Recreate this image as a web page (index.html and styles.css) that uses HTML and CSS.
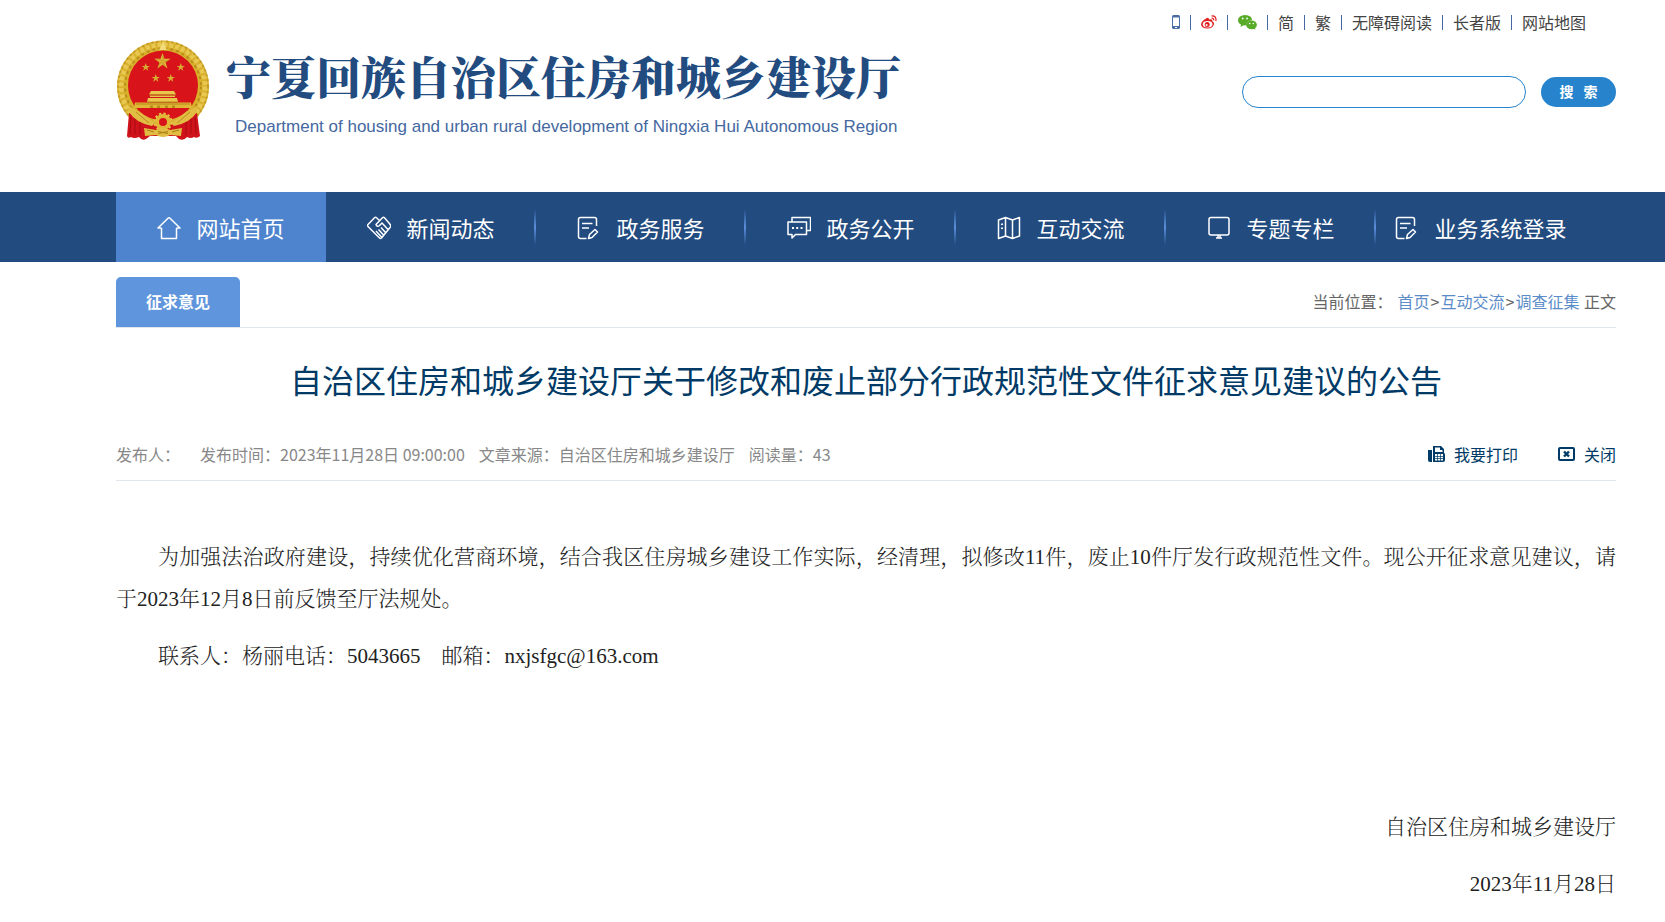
FILE: index.html
```html
<!DOCTYPE html>
<html lang="zh-CN">
<head>
    <meta charset="UTF-8">
    <meta name="viewport" content="width=device-width, initial-scale=1.0">
    <title>自治区住房和城乡建设厅关于修改和废止部分行政规范性文件征求意见建议的公告</title>
    <link rel="stylesheet" href="styles.css">
</head>
<body>
    <!-- shared icon shapes -->
    <svg class="defs" width="0" height="0" aria-hidden="true">
        <symbol id="star" viewBox="-10 -10 20 20">
            <path fill="#e3b93a" d="M0-10 2.3-3.1H9.5L3.6 1.2 5.9 8.1 0 3.8-5.9 8.1-3.6 1.2-9.5-3.1H-2.3z"/>
            <path fill="#b98a1c" d="M0 0 0-10 2.3-3.1zM0 0 9.5-3.1 3.6 1.2zM0 0 5.9 8.1 0 3.8zM0 0-5.9 8.1-3.6 1.2zM0 0-9.5-3.1-2.3-3.1z" opacity=".6"/>
        </symbol>
        <symbol id="form" viewBox="0 0 24 24">
            <path d="M19.5 10V3.500Q19.500 1.500 17.500 1.500H3.500Q1.500 1.500 1.500 3.500V20.500Q1.500 22.500 3.500 22.500H9.500M5 7.500H15.500M5 12H12M11.500 22.500 12.500 18.500 18 13.500 20.500 16 15 21.500z"/>
        </symbol>
    </svg>

    <header class="header wrap">
        <a class="brand" href="#">
            <svg class="emblem" viewBox="0 0 94 102" aria-hidden="true">
                <circle cx="47" cy="47.500" r="46" fill="#d9b02c"/>
                <circle cx="47" cy="47.500" r="42" fill="none" stroke="#e8c850" stroke-width="5" stroke-dasharray="4 2"/>
                <circle cx="47" cy="47.500" r="38" fill="none" stroke="#b98d1d" stroke-width="2" stroke-dasharray="3 3"/>
                <circle cx="47" cy="47.500" r="45" fill="none" stroke="#c39a25" stroke-width="2" stroke-dasharray="2 3"/>
                <path d="M43 11 46 5 47 0 48 5 51 11z" fill="#f3dc7a"/>
                <circle cx="47" cy="46.500" r="35" fill="#d8131a"/>
                <use href="#star" x="38" y="14" width="17" height="17"/>
                <use href="#star" x="25.500" y="24" width="8.500" height="8.500"/>
                <use href="#star" x="60.500" y="24" width="8.500" height="8.500"/>
                <use href="#star" x="35.500" y="35" width="8.500" height="8.500"/>
                <use href="#star" x="50.500" y="35" width="8.500" height="8.500"/>
                <path d="M35 52H58L60 55.500H33zM34 56.500H59V58H34zM32 59H61L62 63H31z" fill="#e9c64c"/>
                <path d="M19 63.500H75L76 69H18z" fill="#dfb735"/>
                <path d="M31 63H62M33 56H60M20 65H74" stroke="#a97c14" stroke-width=".8"/>
                <path d="M34 69V66.500H37V69M41 69V66.500H44V69M49 69V66.500H52V69M56 69V66.500H59V69" fill="#b98d1d"/>
                <path d="M13 74 20 76 31 83 38 85.500 47 87 56 85.500 63 83 74 76 81 74 84 97Q81 100 78 98 75 100 71 98 68 102 63 100L60 97H34L30 100Q26 102 23 98 18 100 15 98 12 100 11 97z" fill="#d0121a"/>
                <path d="M19 76V95M15 78 14 95M24 80V96M75 76V95M79 78 80 95M70 80V96" stroke="#a80b12" stroke-width="1"/>
                <path d="M13 67Q26 74 39 84L36 87Q20 84 13 73zM81 67Q68 74 55 84L58 87Q74 84 81 73z" fill="#e2bd43"/>
                <path d="M20 73 33 84M74 73 61 84" stroke="#b98d1d" stroke-width="1"/>
                <circle cx="47" cy="83" r="8" fill="none" stroke="#e6c248" stroke-width="3" stroke-dasharray="2.200 2"/>
                <circle cx="47" cy="83" r="6" fill="#d8131a" stroke="#e0b737" stroke-width="4"/>
                <path d="M28 89 40 91Q47 86 54 91L66 89 65 97 54 96Q47 100 40 96L29 97z" fill="#e2bd43"/>
                <path d="M31 91 38 93M63 91 56 93M42 92.500 52 94.500M52 92.500 42 94.500" stroke="#a97c14" stroke-width="1"/>
            </svg>
            <span class="brand-text">
                <strong class="brand-name">宁夏回族自治区住房和城乡建设厅</strong>
                <span class="brand-en" lang="en">Department of housing and urban rural development of Ningxia Hui Autonomous Region</span>
            </span>
        </a>
        <div class="header-side">
            <ul class="top-links">
                <li><a href="#" aria-label="手机版"><svg width="8" height="14" viewBox="0 0 8 14"><rect width="8" height="14" rx="1.500" fill="#4a6fa5"/><path fill="#fff" d="M1 2.500H7V11H1zM3 12H5V13H3z"/></svg></a></li>
                <li><a href="#" aria-label="微博"><svg width="16" height="14" viewBox="0 0 16 14"><path fill="#e02020" d="M6 3Q8 2.200 8 4.600 12 3.200 11.300 6.200 13.500 7 13 9.200 11.500 13.500 6.500 13.500 0 13.200 0 9.200 1 5.200 6 3z"/><ellipse cx="6.600" cy="9.200" rx="4.800" ry="3.200" fill="#fff"/><circle cx="6.200" cy="9.500" r="2.500" fill="#e02020"/><circle cx="5.600" cy="9.900" r="1" fill="#fff"/><path d="M10.500 1Q15.500.5 15 6M10.700 3.200Q13 3 12.700 5.300" fill="none" stroke="#e02020" stroke-width="1.200"/></svg></a></li>
                <li><a href="#" aria-label="微信"><svg width="19" height="15" viewBox="0 0 19 15"><path fill="#57ab27" d="M7 0Q14 .3 14 5.200 8.500 5.500 8.300 10.300L5 10.400 2.500 12 3 9.500Q0 8 0 5 .5.300 7 0z"/><ellipse cx="13.500" cy="9.800" rx="5.400" ry="4.400" fill="#57ab27"/><path fill="#57ab27" d="M15 13 17.200 15 17 12z"/><g fill="#fff"><circle cx="4.700" cy="3.500" r=".9"/><circle cx="9" cy="3.500" r=".9"/><circle cx="11.700" cy="8.500" r=".8"/><circle cx="15.300" cy="8.500" r=".8"/></g></svg></a></li>
                <li><a href="#">简</a></li>
                <li><a href="#">繁</a></li>
                <li><a href="#">无障碍阅读</a></li>
                <li><a href="#">长者版</a></li>
                <li><a href="#">网站地图</a></li>
            </ul>
            <form class="search" action="#">
                <input class="search-input" type="text" name="q" aria-label="搜索">
                <button class="search-btn" type="submit"><span>搜</span><span>索</span></button>
            </form>
        </div>
    </header>

    <nav class="nav">
        <ul class="nav-list wrap">
            <li class="nav-item active"><a href="#"><svg class="nav-icon" viewBox="0 0 24 24"><path d="M4.500 12V22.500H19.500V12M4.500 12H1L11 2.200Q12 1.300 13 2.200L23 12H19.500"/></svg>网站首页</a></li>
            <li class="nav-item"><a href="#"><svg class="nav-icon" viewBox="0 0 24 24"><path d="M12.500 4.500 9.500 1.800Q8.500.8 7.500 1.800L1 8.500Q0 9.500 1 10.500L12.500 22Q13.500 23 14.500 22L23.500 11Q24 9.500 23 8.200L17.500 1.800Q16.500.8 15.500 1.800L9 8.500Q10 11.500 12.500 9.500L15 7 21 13.500M14 11.500 18.500 16.500M11.500 13.500 16.500 19M9 15 14.500 21"/></svg>新闻动态</a></li>
            <li class="nav-item"><a href="#"><svg class="nav-icon"><use href="#form"/></svg>政务服务</a></li>
            <li class="nav-item"><a href="#"><svg class="nav-icon" viewBox="0 0 24 24"><path d="M5 5.500V1.500H23.500V14.500H19.500M1 6H19.500V18.500H8.500L5 22V18.500H1z"/><path d="M5 12H7M9.200 12H11.200M13.500 12H15.500" stroke-width="2"/></svg>政务公开</a></li>
            <li class="nav-item"><a href="#"><svg class="nav-icon" viewBox="0 0 24 24"><path d="M1.500 4 8.500 1.500 15.500 4 22.500 1.500V20L15.500 22.500 8.500 20 1.500 22.500zM8.500 1.500V20M15.500 4V22.500M4 8.500 6 8M4 12.500 6 12"/></svg>互动交流</a></li>
            <li class="nav-item"><a href="#"><svg class="nav-icon" viewBox="0 0 24 24"><rect x="2" y="1.500" width="20" height="17.500" rx="2"/><path d="M11 19V21.500M13 19V21.500M9 22H15"/></svg>专题专栏</a></li>
            <li class="nav-item"><a href="#"><svg class="nav-icon"><use href="#form"/></svg>业务系统登录</a></li>
        </ul>
    </nav>

    <main class="wrap">
        <div class="location">
            <h2 class="column-name">征求意见</h2>
            <div class="crumbs"><span class="crumbs-label">当前位置：</span><a href="#">首页</a>&gt;<a href="#">互动交流</a>&gt;<a href="#">调查征集</a> 正文</div>
        </div>

        <article>
            <h1 class="title">自治区住房和城乡建设厅关于修改和废止部分行政规范性文件征求意见建议的公告</h1>
            <div class="meta">
                <div class="meta-info">
                    <span class="author">发布人：</span>
                    <span class="time">发布时间：2023年11月28日 09:00:00</span>
                    <span class="source">文章来源：自治区住房和城乡建设厅</span>
                    <span>阅读量：43</span>
                </div>
                <div class="meta-tools">
                    <button type="button"><svg width="17" height="16" viewBox="0 0 17 16"><path fill="#003a66" fill-rule="evenodd" d="M0 4H4V16H2Q0 16 0 14zM5 0H13L16 3V7Q17 7 17 9V14Q17 16 15 16H5zM7 1.500V6H14.500V4H12V1.500zM7 8V14.500H15V8z"/><path stroke="#003a66" stroke-width=".7" d="M9.500 8V15M12.500 8V15M7 10.500H15M7 12.500H15"/></svg>我要打印</button>
                    <button type="button"><svg width="17" height="14" viewBox="0 0 17 14"><rect x="1" y="1" width="15" height="12" rx="1" fill="none" stroke="#003a66" stroke-width="2"/><path d="M6 4.500 11 9.500M11 4.500 6 9.500" stroke="#003a66" stroke-width="2.400"/></svg>关闭</button>
                </div>
            </div>
            <div class="content">
                <p>为加强法治政府建设，持续优化营商环境，结合我区住房城乡建设工作实际，经清理，拟修改11件，废止10件厅发行政规范性文件。现公开征求意见建议，请于2023年12月8日前反馈至厅法规处。</p>
                <p>联系人：杨丽电话：5043665　邮箱：nxjsfgc@163.com</p>
                <p>&nbsp;</p>
                <p>&nbsp;</p>
                <p class="sign">自治区住房和城乡建设厅</p>
                <p class="sign">2023年11月28日</p>
            </div>
        </article>
    </main>
</body>
</html>
```
FILE: styles.css
```css
* {
    box-sizing: border-box;
    margin: 0;
    padding: 0;
}
body {
    background: #fff;
    color: #444;
    font-family: "Noto Sans CJK SC", sans-serif;
    font-size: 16px;
    line-height: 24px;
    overflow-x: hidden;
}
ul {
    list-style: none;
}
a {
    color: inherit;
    text-decoration: none;
}
svg {
    display: block;
    flex: none;
}
button, input {
    font: inherit;
}
.defs {
    position: absolute;
}
.wrap {
    margin-left: 116px;
    margin-right: 49px;
}

/* header */
.header {
    display: flex;
    justify-content: space-between;
    height: 192px;
}
.brand {
    display: flex;
    align-items: flex-start;
    gap: 16px;
    padding-top: 39px;
}
.emblem {
    width: 94px;
    height: 102px;
}
.brand-text {
    display: flex;
    flex-direction: column;
    gap: 3px;
    padding-top: 5px;
    white-space: nowrap;
}
.brand-name {
    color: #224b80;
    font-family: "Noto Serif CJK SC", "Noto Sans CJK SC", serif;
    font-size: 45px;
    font-weight: 900;
    line-height: 64px;
}
.brand-en {
    color: #44689f;
    font-family: "Liberation Sans", Arial, sans-serif;
    font-size: 17px;
    line-height: 32px;
    padding-left: 9px;
}
.header-side {
    display: flex;
    flex-direction: column;
    align-items: flex-end;
    padding-top: 10px;
}
.top-links {
    display: flex;
    align-items: center;
    height: 24px;
    padding-right: 20px;
}
.top-links li {
    display: flex;
    align-items: center;
}
.top-links li + li::before {
    content: "";
    width: 1px;
    height: 15px;
    background: #44689f;
}
.top-links a {
    padding: 0 10px;
}
.search {
    display: flex;
    align-items: center;
    gap: 15px;
    margin-top: 42px;
}
.search-input {
    width: 284px;
    height: 32px;
    padding: 0 16px;
    border: 1px solid #2784cc;
    border-radius: 16px;
    outline: none;
}
.search-btn {
    display: flex;
    align-items: center;
    justify-content: center;
    gap: 10px;
    width: 75px;
    height: 30px;
    padding-bottom: 2px;
    border: none;
    border-radius: 15px;
    background: #2784cc;
    color: #fff;
    font-size: 14px;
    font-weight: bold;
    cursor: pointer;
}

/* nav */
.nav {
    background: #224b80;
}
.nav-list {
    display: flex;
}
.nav-item {
    flex: 0 0 14%;
    background: linear-gradient(to bottom, transparent, #5b8fdc, transparent) right center / 2px 36px no-repeat;
}
.nav-item.active {
    background: #4e84ce;
}
.nav-item:last-child {
    background: none;
}
.nav-item a {
    display: flex;
    align-items: center;
    justify-content: center;
    gap: 15px;
    height: 70px;
    color: #fff;
    font-size: 22px;
    white-space: nowrap;
}
.nav-icon {
    width: 24px;
    height: 24px;
    margin-top: 2px;
    fill: none;
    stroke: #fff;
    stroke-width: 1.5;
    stroke-linejoin: round;
}

/* location bar */
.location {
    display: flex;
    justify-content: space-between;
    margin-top: 15px;
    border-bottom: 1px solid #dfe6ee;
    line-height: 48px;
}
.column-name {
    padding: 0 30px 2px;
    border-radius: 5px 5px 0 0;
    background: #5f95dc;
    color: #fff;
    font-size: 16px;
    font-weight: bold;
}
.crumbs {
    color: #666;
}
.crumbs-label {
    margin-right: 4px;
}
.crumbs a {
    margin: 0 1px;
    color: #5b8cc8;
}

/* article */
.title {
    padding-top: 27px;
    color: #003a66;
    font-size: 32px;
    font-weight: normal;
    line-height: 48px;
    text-align: center;
}
.meta {
    display: flex;
    justify-content: space-between;
    align-items: center;
    margin-top: 27px;
    padding: 12px 0 14px;
    border-bottom: 1px solid #dfe6ee;
}
.meta-info {
    display: flex;
    color: #888;
}
.author {
    margin-right: 20px;
}
.time,
.source {
    margin-right: 14px;
}
.meta-tools {
    display: flex;
    gap: 40px;
}
.meta-tools button {
    display: flex;
    align-items: center;
    gap: 9px;
    border: none;
    background: none;
    color: #003a66;
    cursor: pointer;
}
.content {
    padding-top: 55px;
    color: #222;
    font-family: "Liberation Serif", "Noto Serif CJK SC", "Noto Sans CJK SC", serif;
    font-size: 21px;
    font-weight: 300;
    line-height: 42px;
    text-align: justify;
}
.content p {
    margin-bottom: 15px;
    text-indent: 2em;
}
.content p.sign {
    text-align: right;
}
```
